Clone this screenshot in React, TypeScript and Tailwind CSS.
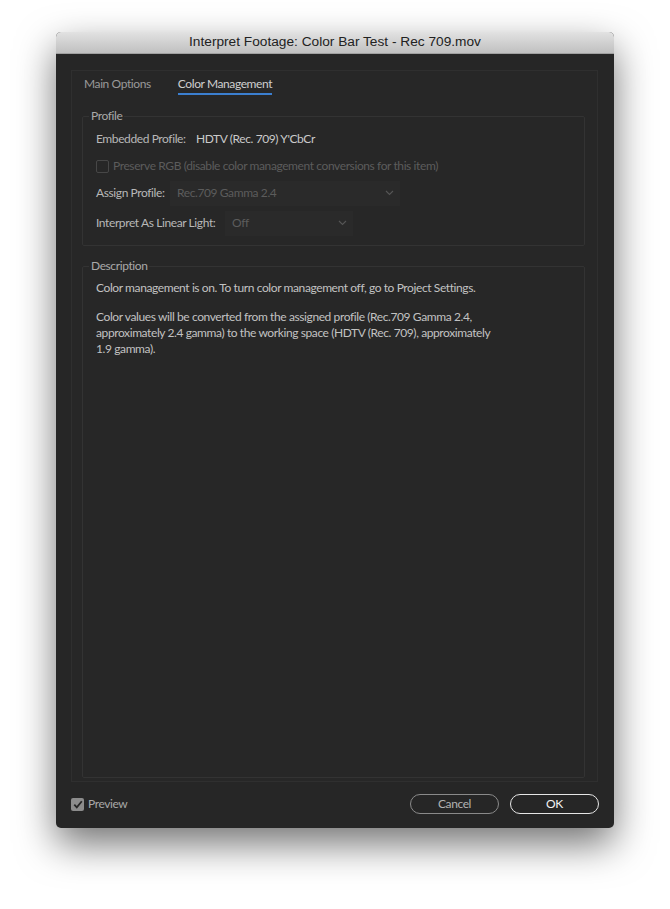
import React from "react";

function Chevron() {
  return (
    <svg width="9" height="6" viewBox="0 0 9 6" fill="none">
      <path d="M1 1l3.5 3.5L8 1" stroke="#555" strokeWidth="1.1" />
    </svg>
  );
}

export default function App() {
  return (
    <div className="w-[670px] h-[909px] bg-white pt-[32px] pl-[56px] font-[Lato,sans-serif] tracking-[-0.4px]">
      <div className="w-[558px] h-[796px] bg-[#262626] rounded-[5px] overflow-hidden flex flex-col shadow-[0_16px_38px_rgba(0,0,0,0.55)]">
        <div className="h-[22px] shrink-0 bg-gradient-to-b from-[#e2e2e2] to-[#c0c0c0] border-b border-[#a0a0a0] flex items-center justify-center text-[13.7px] tracking-normal text-[#222] font-['Liberation_Sans',sans-serif]">
          Interpret Footage: Color Bar Test - Rec 709.mov
        </div>
        <div className="flex-1 flex flex-col px-[15px] pt-[16px]">
          <div className="h-[712px] w-[527px] border border-[#2f2f2f] bg-[#272727] flex flex-col pb-[3px]">
            <div className="flex pl-[12px] pt-[4px] gap-[27px] text-[12px] whitespace-nowrap">
              <div className="h-[20px] flex items-center border-b-2 border-transparent text-[#9a9a9a]">Main Options</div>
              <div className="h-[20px] flex items-center border-b-2 border-[#3b7fd0] text-[#cfcfcf]">Color Management</div>
            </div>
            <fieldset className="mt-[13px] ml-[10px] mr-[12px] border border-[#333] rounded-[2px] text-[12px] whitespace-nowrap">
              <legend className="ml-[6px] px-[2px] leading-[16px] text-[#a9a9a9]">Profile</legend>
              <div className="pl-[13px] pt-[3px] pb-[8px] flex flex-col">
                <div className="h-[24px] flex items-center">
                  <span className="w-[100px] text-[#b8b8b8]">Embedded Profile:</span>
                  <span className="text-[#cacaca]">HDTV (Rec. 709) Y'CbCr</span>
                </div>
                <div className="h-[26px] mt-[2px] flex items-center">
                  <span className="w-[13px] h-[13px] border border-[#474747] rounded-[2px] mr-[4px]" />
                  <span className="text-[#5c5c5c]">Preserve RGB (disable color management conversions for this item)</span>
                </div>
                <div className="h-[28px] flex items-center">
                  <span className="w-[74px] text-[#b8b8b8]">Assign Profile:</span>
                  <div className="w-[230px] h-[25px] bg-[#2a2a2a] flex items-center justify-between pl-[7px] pr-[6px]">
                    <span className="text-[#5c5c5c]">Rec.709 Gamma 2.4</span>
                    <Chevron />
                  </div>
                </div>
                <div className="h-[28px] mt-[2px] flex items-center">
                  <span className="w-[129px] text-[#b8b8b8]">Interpret As Linear Light:</span>
                  <div className="w-[128px] h-[25px] bg-[#2a2a2a] flex items-center justify-between pl-[7px] pr-[6px]">
                    <span className="text-[#5c5c5c]">Off</span>
                    <Chevron />
                  </div>
                </div>
              </div>
            </fieldset>
            <fieldset className="mt-[12px] ml-[10px] mr-[12px] flex-1 border border-[#333] rounded-[2px] text-[12px]">
              <legend className="ml-[6px] px-[2px] leading-[16px] text-[#a9a9a9]">Description</legend>
              <div className="pl-[13px] pt-[6px] leading-[16px] text-[#c2c2c2]">
                <p className="whitespace-nowrap">Color management is on. To turn color management off, go to Project Settings.</p>
                <p className="mt-[13px] w-[405px]">
                  Color values will be converted from the assigned profile (Rec.709 Gamma 2.4, approximately 2.4 gamma) to the working space (HDTV (Rec. 709), approximately 1.9 gamma).
                </p>
              </div>
            </fieldset>
          </div>
          <div className="flex-1 flex items-center pb-[2px]">
            <div className="flex items-center gap-[4px]">
              <span className="w-[13px] h-[13px] rounded-[2px] bg-[#8c8c8c] flex items-center justify-center">
                <svg width="10" height="9" viewBox="0 0 10 9" fill="none">
                  <path d="M1.3 4.6l2.5 2.7L8.8 1.2" stroke="#262626" strokeWidth="1.8" />
                </svg>
              </span>
              <span className="text-[12px] text-[#a8a8a8]">Preview</span>
            </div>
            <div className="ml-auto flex gap-[11px]">
              <button className="w-[89px] h-[20px] rounded-full border-[1.5px] border-[#8a8a8a] text-[12px] text-[#b2b2b2] flex items-center justify-center">Cancel</button>
              <button className="w-[89px] h-[20px] rounded-full border-[1.5px] border-[#e6e6e6] text-[12px] text-[#f2f2f2] flex items-center justify-center">OK</button>
            </div>
          </div>
        </div>
      </div>
    </div>
  );
}
